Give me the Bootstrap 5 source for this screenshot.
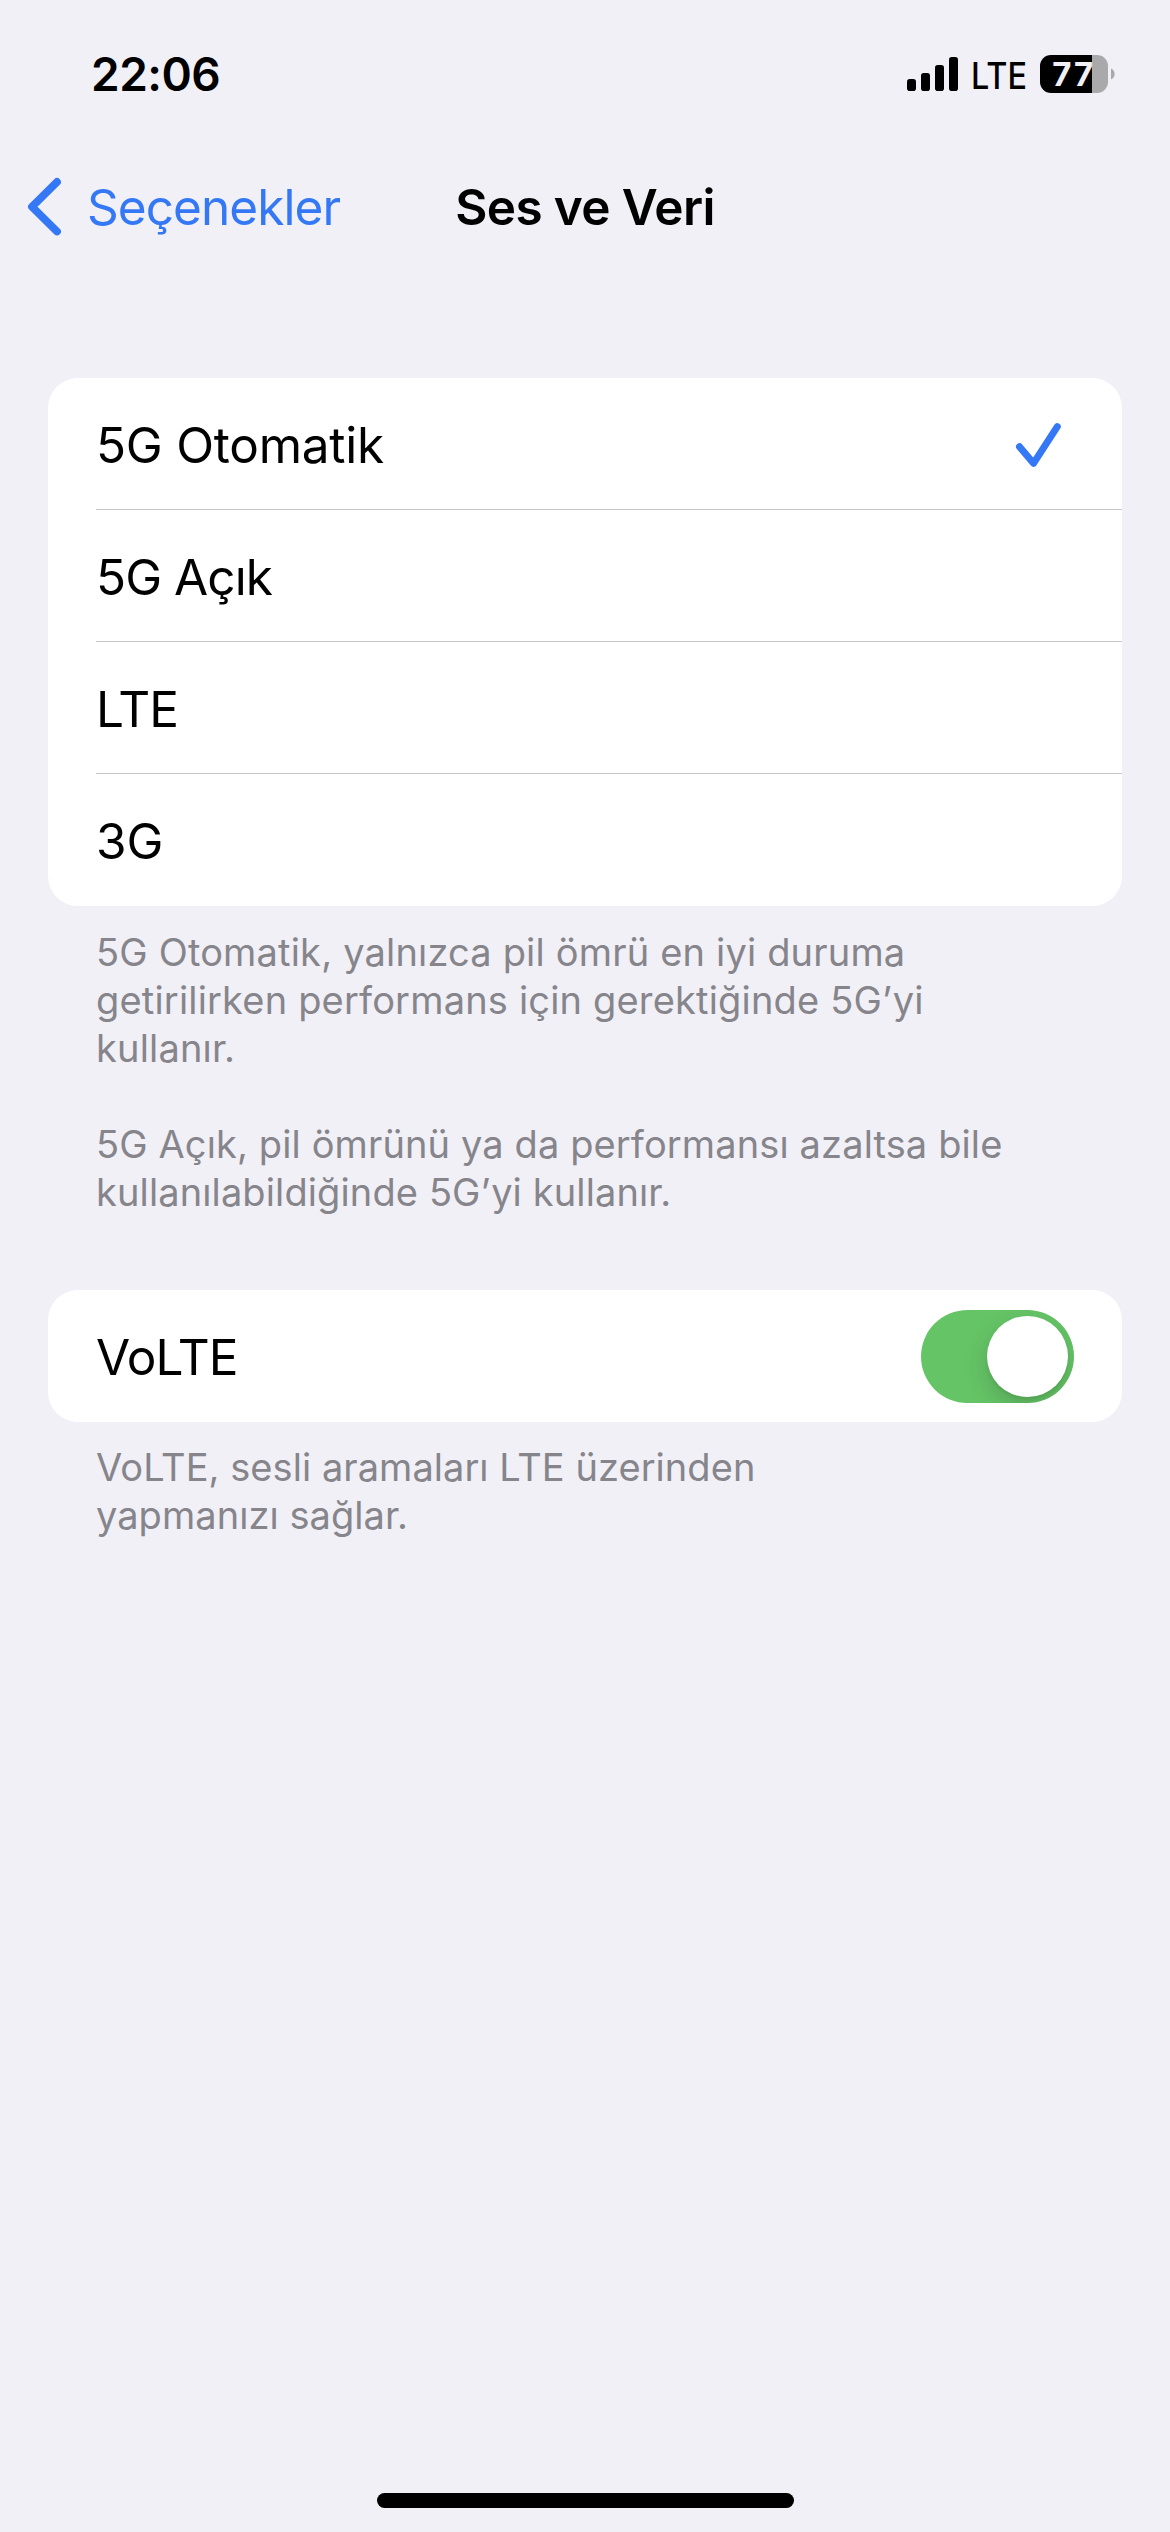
<!DOCTYPE html>
<html lang="tr">
<head>
<meta charset="utf-8">
<meta name="viewport" content="width=device-width, initial-scale=1">
<title>Ses ve Veri</title>
<link href="https://cdn.jsdelivr.net/npm/bootstrap@5.3.0/dist/css/bootstrap.min.css" rel="stylesheet">
<style>
  body { background: #f1f0f6; color: #000; font-family: Inter, "Liberation Sans", sans-serif; font-size: 49.5px; line-height: 60px; min-height: 2532px; overflow: hidden; }
  svg { display: block; flex: none; overflow: visible; }
  .status-bar { height: 141px; padding: 44px 55px 0 91px; }
  .clock { font-size: 46px; font-weight: 600; letter-spacing: -.5px; }
  .status-icons { padding-top: 6px; }
  .status-icons text { font-family: Inter, sans-serif; }
  .title-bar { height: 132px; padding: 0 28px; }
  .side { flex: 1 1 0; }
  .back-link { color: #3478f6; letter-spacing: -.94px; gap: 26px; }
  .page-title { font-size: inherit; line-height: inherit; font-weight: 600; letter-spacing: -.63px; }
  .content { padding: 105px 48px 0; }
  .panel { background: #fff; border-radius: 30px; padding-left: 48px; }
  .panel .list-group { --bs-list-group-border-color: #c6c6c8; --bs-list-group-bg: transparent; --bs-list-group-color: #000; border-radius: 0; }
  .panel .list-group-item { height: 132px; padding: 3px 61px 0 0; border-width: 0 0 1px; }
  .panel .list-group-item:last-child { border-bottom: 0; padding-top: 2px; }
  .wide { letter-spacing: -.25px; }
  .tight { letter-spacing: -.95px; }
  .note { color: #86858b; font-size: 38px; line-height: 48px; letter-spacing: .18px; padding: 22px 48px 0; }
  .note p { margin-bottom: 48px; }
  .note p:last-child { margin-bottom: 0; letter-spacing: .12px; }
  .second { margin-top: 74px; }
  .second .list-group-item { padding-right: 48px; }
  .second .note { padding-top: 21px; }
  .second .note p { letter-spacing: .05px; }
  .toggle { width: 153px; height: 93px; border-radius: 47px; background: #65c466; padding: 6px; overflow: hidden; margin-top: -1px; }
  .knob { width: 81px; height: 81px; border-radius: 50%; background: #fff; box-shadow: 0 9px 24px rgba(0,0,0,.16), 0 3px 3px rgba(0,0,0,.06); }
  .home-bar { width: 417px; height: 15px; border-radius: 8px; background: #000; margin-bottom: 24px; }
</style>
<script src="https://cdn.jsdelivr.net/npm/bootstrap@5.3.0/dist/js/bootstrap.bundle.min.js"></script>
</head>
<body class="d-flex flex-column">
  <header>
    <div class="status-bar d-flex justify-content-between align-items-start">
      <div class="clock">22:06</div>
      <div class="status-icons d-flex">
        <svg width="61" height="50" viewBox="907 50 61 50">
          <rect x="907" y="79" width="9" height="12" rx="2.8"/>
          <rect x="921" y="73" width="9" height="18" rx="2.8"/>
          <rect x="935" y="65" width="9" height="26" rx="2.8"/>
          <rect x="949" y="57" width="9" height="34" rx="2.8"/>
        </svg>
        <svg width="72" height="50" viewBox="968 50 72 50">
          <text x="971" y="89" font-size="37" font-weight="500" textLength="56" lengthAdjust="spacingAndGlyphs">LTE</text>
        </svg>
        <svg width="75" height="50" viewBox="1040 50 75 50">
          <path d="M1092 55h5a11 11 0 0 1 11 11v16a11 11 0 0 1-11 11h-5z" fill="#a9a9ab"/>
          <path d="M1051 55h41v38h-41a11 11 0 0 1-11-11V66a11 11 0 0 1 11-11z"/>
          <path d="M1111 68.500a6 6 0 0 1 0 11z" fill="#a9a9ab"/>
          <text x="1052.300" y="86" font-size="33" font-weight="700" fill="#f1f0f6" textLength="41" lengthAdjust="spacing">77</text>
        </svg>
      </div>
    </div>
    <nav class="title-bar d-flex align-items-center">
      <div class="side">
        <a class="back-link d-flex align-items-center text-decoration-none" href="#">
          <svg width="33" height="58" viewBox="28 178 33 58"><path d="M57 182 32 206.700 57 231.400" fill="none" stroke="#3478f6" stroke-width="7.800" stroke-linecap="round" stroke-linejoin="round"/></svg>
          <span>Seçenekler</span>
        </a>
      </div>
      <h1 class="page-title m-0">Ses ve Veri</h1>
      <div class="side"></div>
    </nav>
  </header>

  <main class="content flex-grow-1">
    <section>
      <div class="panel">
        <ul class="list-group">
          <li class="list-group-item d-flex align-items-center justify-content-between">
            <span class="wide">5G Otomatik</span>
            <svg width="45" height="46" viewBox="1016 422 45 46"><path d="M1019.500 446.700 1033.500 463.300 1057.300 426.700" fill="none" stroke="#3478f6" stroke-width="7" stroke-linecap="round" stroke-linejoin="round"/></svg>
          </li>
          <li class="list-group-item d-flex align-items-center"><span class="tight">5G Açık</span></li>
          <li class="list-group-item d-flex align-items-center"><span class="tight">LTE</span></li>
          <li class="list-group-item d-flex align-items-center"><span>3G</span></li>
        </ul>
      </div>
      <div class="note">
        <p>5G Otomatik, yalnızca pil ömrü en iyi duruma<br>getirilirken performans için gerektiğinde 5G’yi<br>kullanır.</p>
        <p>5G Açık, pil ömrünü ya da performansı azaltsa bile<br>kullanılabildiğinde 5G’yi kullanır.</p>
      </div>
    </section>

    <section class="second">
      <div class="panel">
        <ul class="list-group">
          <li class="list-group-item d-flex align-items-center justify-content-between">
            <span class="tight">VoLTE</span>
            <div class="toggle d-flex justify-content-end" role="switch" aria-checked="true" aria-label="VoLTE"><div class="knob"></div></div>
          </li>
        </ul>
      </div>
      <div class="note">
        <p>VoLTE, sesli aramaları LTE üzerinden<br>yapmanızı sağlar.</p>
      </div>
    </section>
  </main>

  <div class="home-bar align-self-center"></div>
</body>
</html>
